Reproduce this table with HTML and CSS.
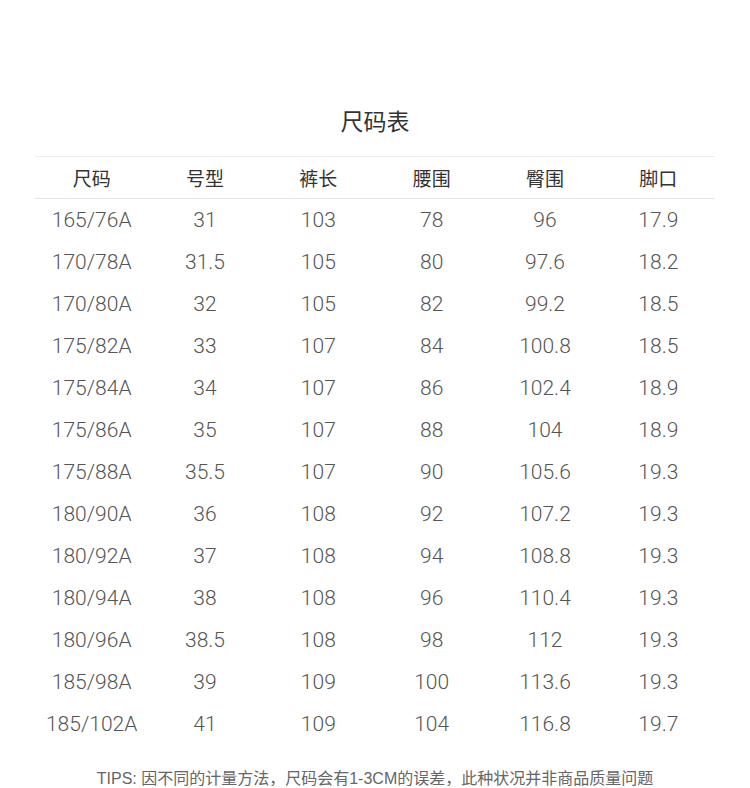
FILE: index.html
```html
<!DOCTYPE html>
<html lang="zh">
<head>
<meta charset="utf-8">
<title>尺码表</title>
<link rel="stylesheet" href="styles.css">
</head>
<body>
<div class="page">
  <h1 class="title">尺码表</h1>
  <div class="table">
    <div class="row head">
      <div>尺码</div><div>号型</div><div>裤长</div><div>腰围</div><div>臀围</div><div>脚口</div>
    </div>
    <div class="row"><div>165/76A</div><div>31</div><div>103</div><div>78</div><div>96</div><div>17.9</div></div>
    <div class="row"><div>170/78A</div><div>31.5</div><div>105</div><div>80</div><div>97.6</div><div>18.2</div></div>
    <div class="row"><div>170/80A</div><div>32</div><div>105</div><div>82</div><div>99.2</div><div>18.5</div></div>
    <div class="row"><div>175/82A</div><div>33</div><div>107</div><div>84</div><div>100.8</div><div>18.5</div></div>
    <div class="row"><div>175/84A</div><div>34</div><div>107</div><div>86</div><div>102.4</div><div>18.9</div></div>
    <div class="row"><div>175/86A</div><div>35</div><div>107</div><div>88</div><div>104</div><div>18.9</div></div>
    <div class="row"><div>175/88A</div><div>35.5</div><div>107</div><div>90</div><div>105.6</div><div>19.3</div></div>
    <div class="row"><div>180/90A</div><div>36</div><div>108</div><div>92</div><div>107.2</div><div>19.3</div></div>
    <div class="row"><div>180/92A</div><div>37</div><div>108</div><div>94</div><div>108.8</div><div>19.3</div></div>
    <div class="row"><div>180/94A</div><div>38</div><div>108</div><div>96</div><div>110.4</div><div>19.3</div></div>
    <div class="row"><div>180/96A</div><div>38.5</div><div>108</div><div>98</div><div>112</div><div>19.3</div></div>
    <div class="row"><div>185/98A</div><div>39</div><div>109</div><div>100</div><div>113.6</div><div>19.3</div></div>
    <div class="row"><div>185/102A</div><div>41</div><div>109</div><div>104</div><div>116.8</div><div>19.7</div></div>
  </div>
  <p class="tips">TIPS: 因不同的计量方法，尺码会有1-3CM的误差，此种状况并非商品质量问题</p>
</div>
</body>
</html>
```

FILE: styles.css
```css
html, body {
  margin: 0;
  padding: 0;
  background: #ffffff;
}
.page {
  width: 750px;
  height: 788px;
  padding-top: 100px;
  box-sizing: border-box;
  font-family: Roboto, "Noto Sans CJK SC", sans-serif;
  overflow: hidden;
}
.title {
  margin: 0 0 16px;
  height: 40px;
  line-height: 40px;
  text-align: center;
  font-family: "Noto Sans CJK SC", sans-serif;
  font-weight: 400;
  font-size: 23px;
  color: #333;
}
.table {
  margin: 0 35px;
  border-top: 1px solid #ececec;
}
.row {
  display: grid;
  grid-template-columns: repeat(6, 1fr);
  height: 42px;
  align-items: center;
  text-align: center;
  font-family: Roboto, "Noto Sans CJK SC", sans-serif;
  font-weight: 300;
  font-size: 21px;
  color: #555;
}
.row.head {
  height: 41px;
  border-bottom: 1px solid #e6e6e6;
  font-family: "Noto Sans CJK SC", sans-serif;
  font-weight: 400;
  font-size: 19px;
  color: #333;
}
.tips {
  margin: 22px 0 0;
  line-height: 24px;
  text-align: center;
  font-family: "Liberation Sans", "Noto Sans CJK SC", sans-serif;
  font-size: 16px;
  color: #666;
}
```
